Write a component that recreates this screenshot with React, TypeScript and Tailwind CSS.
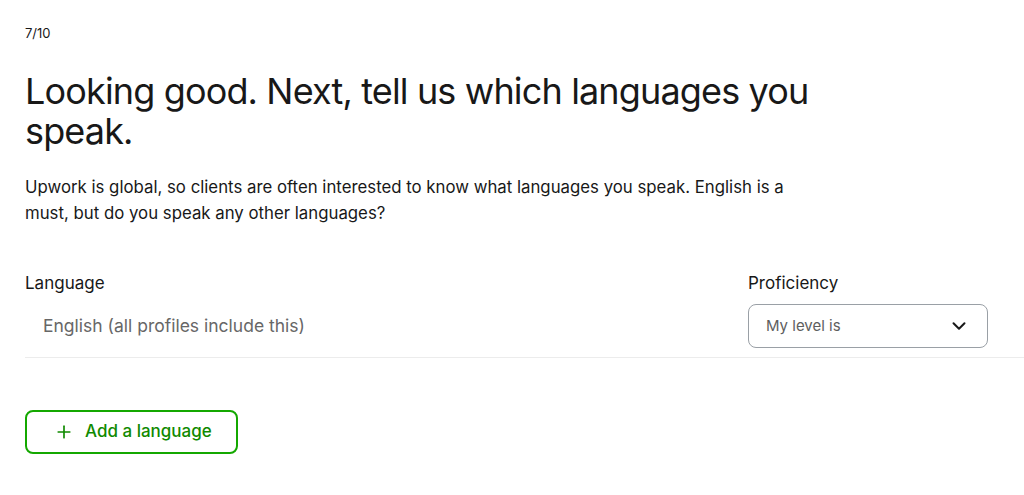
import { ChevronDown, Plus } from "lucide-react";

export default function App() {
  return (
    <div
      className="min-h-[495px] bg-white text-[#181818] overflow-hidden"
      style={{ fontFamily: "Inter, 'Noto Sans', sans-serif" }}
    >
      <div className="pl-[25px] pt-[24px]">
        <p className="text-[13px] leading-[18px]">7/10</p>

        <h1 className="mt-[29px] w-[820px] text-[36px] leading-[40px] font-normal tracking-[-0.85px]">
          Looking good. Next, tell us which languages you speak.
        </h1>

        <p className="mt-[23px] w-[800px] text-[16.8px] leading-[26px]">
          Upwork is global, so clients are often interested to know what languages you speak. English is a
          must, but do you speak any other languages?
        </p>

        <div className="mt-[45px] grid grid-cols-[723px_240px] text-[17px]">
          <div className="leading-[24px]">Language</div>
          <div className="leading-[24px]">Proficiency</div>
        </div>

        <div className="mt-[9px] grid grid-cols-[723px_240px] items-center pb-[9px] border-b border-[#ececec]">
          <div className="pl-[18px] text-[#676767] text-[17.5px]">English (all profiles include this)</div>
          <button className="h-[44px] flex items-center justify-between px-[17px] rounded-[8px] border border-[#9aa0a6] text-[15px] text-[#5e5e5e]">
            <span>My level is</span>
            <ChevronDown className="w-[22px] h-[22px] text-[#181818]" strokeWidth={2.2} />
          </button>
        </div>

        <button className="mt-[52px] w-[213px] h-[44px] flex items-center gap-[11px] pl-[27px] rounded-[8px] border-2 border-[#14a800] text-[#108a00] text-[17px] font-medium">
          <Plus className="w-5 h-5" strokeWidth={2} />
          <span>Add a language</span>
        </button>
      </div>
    </div>
  );
}
